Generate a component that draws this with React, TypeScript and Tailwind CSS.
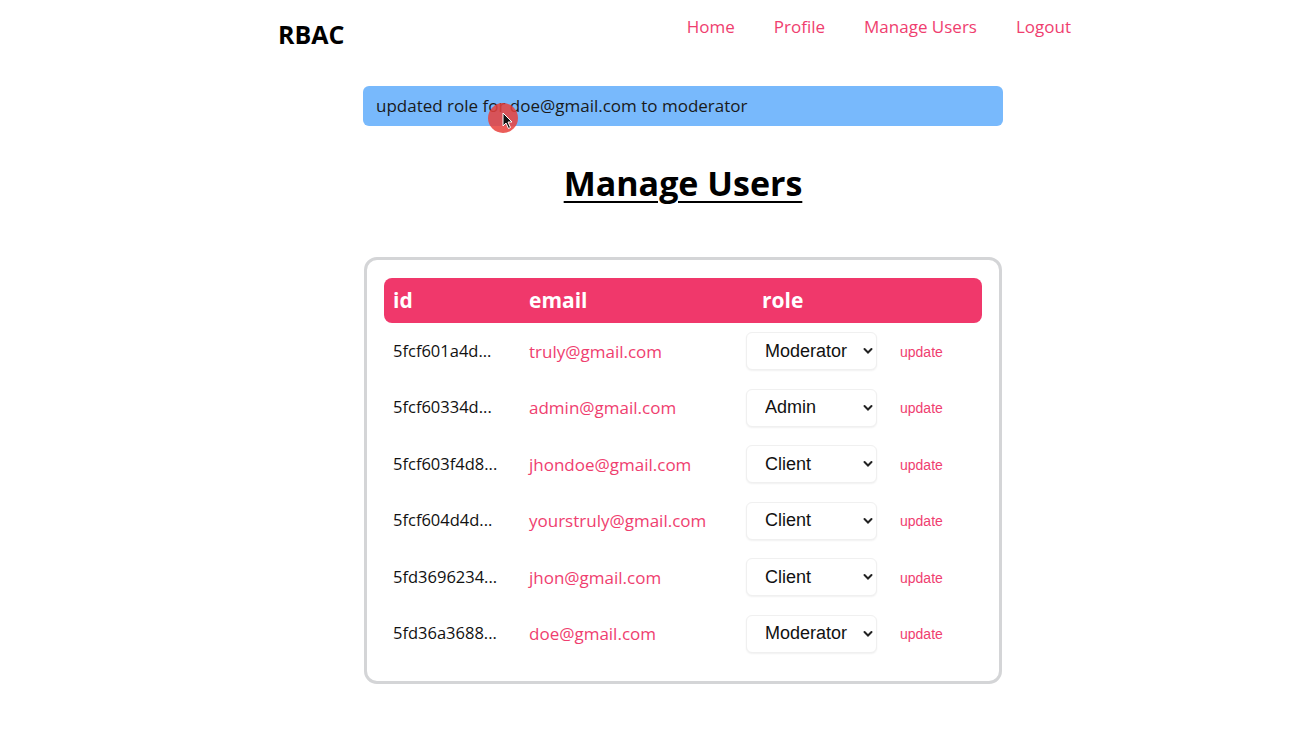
import { useState } from "react";

type User = { id: string; email: string; role: string };

const users: User[] = [
  { id: "5fcf601a4d...", email: "truly@gmail.com", role: "Moderator" },
  { id: "5fcf60334d...", email: "admin@gmail.com", role: "Admin" },
  { id: "5fcf603f4d8...", email: "jhondoe@gmail.com", role: "Client" },
  { id: "5fcf604d4d...", email: "yourstruly@gmail.com", role: "Client" },
  { id: "5fd3696234...", email: "jhon@gmail.com", role: "Client" },
  { id: "5fd36a3688...", email: "doe@gmail.com", role: "Moderator" },
];

function RoleSelect({ value }: { value: string }) {
  const [role, setRole] = useState(value);
  return (
    <div className="relative w-[131px] h-[38px]">
      <select
        value={role}
        onChange={(e) => setRole(e.target.value)}
        className="appearance-none w-full h-full rounded-[6px] border border-[#f0f0f0] bg-white pl-[18px] text-[18px] text-[#111] shadow-[0_1px_2px_rgba(0,0,0,0.06)] font-['Liberation_Sans',Arial,sans-serif] outline-none"
      >
        <option>Admin</option>
        <option>Moderator</option>
        <option>Client</option>
      </select>
      <svg
        className="pointer-events-none absolute right-[4px] top-[15px]"
        width="10"
        height="8"
        viewBox="0 0 10 8"
      >
        <path d="M1.5 2 L5 5.5 L8.5 2" fill="none" stroke="#222" strokeWidth="2" strokeLinecap="round" />
      </svg>
    </div>
  );
}

export default function App() {
  return (
    <div className="min-h-[748px] bg-white font-['Open_Sans',sans-serif] relative">
      {/* nav */}
      <nav className="flex items-start pt-[18px] pl-[278px] w-[1071px]">
        <div className="text-[25px] font-bold text-black leading-none mt-[4px]">RBAC</div>
        <div className="ml-auto flex text-[17px] text-[#ef3e6f] leading-none gap-[39px]">
          <a href="#">Home</a>
          <a href="#">Profile</a>
          <a href="#">Manage Users</a>
          <a href="#">Logout</a>
        </div>
      </nav>

      <main className="ml-[363px] w-[640px] mt-[39px]">
        <div className="h-[40px] rounded-[6px] bg-[#78b9fc] flex items-center pl-[13px] text-[17px] text-[#1a1a1a]">
          updated role for doe@gmail.com to moderator
        </div>

        <h1 className="text-center text-[34px] font-bold underline underline-offset-[5px] decoration-[2px] mt-[40px] leading-none text-black">
          Manage Users
        </h1>

        <div className="mt-[57px] mx-[1px] border-[3px] border-[#d4d5d7] rounded-[13px] px-[17px] pt-[18px] pb-[19px]">
          <div className="grid grid-cols-[136px_217px_1fr] items-center h-[45px] rounded-[8px] bg-[#f0386b] pl-[9px] text-white text-[21px] font-bold">
            <div>id</div>
            <div>email</div>
            <div className="pl-[16px]">role</div>
          </div>
          {users.map((u) => (
            <div
              key={u.id}
              className="grid grid-cols-[136px_217px_131px_1fr] items-center h-[56.5px] pl-[9px] text-[17px]"
            >
              <div className="text-[#111] text-[16.5px]">{u.id}</div>
              <div className="text-[#ef3e6f]">{u.email}</div>
              <RoleSelect value={u.role} />
              <button className="text-left pl-[23px] text-[14px] text-[#ef3e6f] font-['Liberation_Sans',Arial,sans-serif] mt-[2px]">
                update
              </button>
            </div>
          ))}
        </div>
      </main>

      {/* screen-recording cursor highlight */}
      <div className="absolute left-[488px] top-[103px] w-[30px] h-[30px] rounded-full bg-[#e8413c]/85" />
      <svg className="absolute left-[502px] top-[112px]" width="12" height="18" viewBox="0 0 12 18">
        <path d="M1 1 L1 14 L4 11 L6.5 16.5 L8.5 15.5 L6 10 L10 10 Z" fill="#111" stroke="#fff" strokeWidth="1" />
      </svg>
    </div>
  );
}
